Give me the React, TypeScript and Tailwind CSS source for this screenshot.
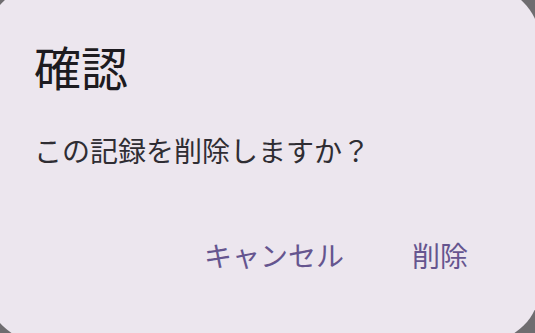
export default function App() {
  return (
    <div className="h-[333px] w-[535px] overflow-hidden bg-[#6f6d70] font-['Noto_Sans_CJK_JP','Noto_Sans',sans-serif]">
      <div className="-ml-[14px] -mt-[14px] w-[554px] rounded-[56px] bg-[#ece6ee] px-[48px] pb-[47px] pt-[48px]">
        <h2 className="text-[47px] leading-[64px] text-[#1d1b20]">確認</h2>
        <p className="mt-[32px] text-[28px] leading-[40px] text-[#2f2d33]">この記録を削除しますか？</p>
        <div className="mt-[45px] flex justify-end gap-[20px]">
          <button className="h-[80px] px-[24px] text-[28px] text-[#65558f]">キャンセル</button>
          <button className="h-[80px] px-[24px] text-[28px] text-[#65558f]">削除</button>
        </div>
      </div>
    </div>
  );
}
